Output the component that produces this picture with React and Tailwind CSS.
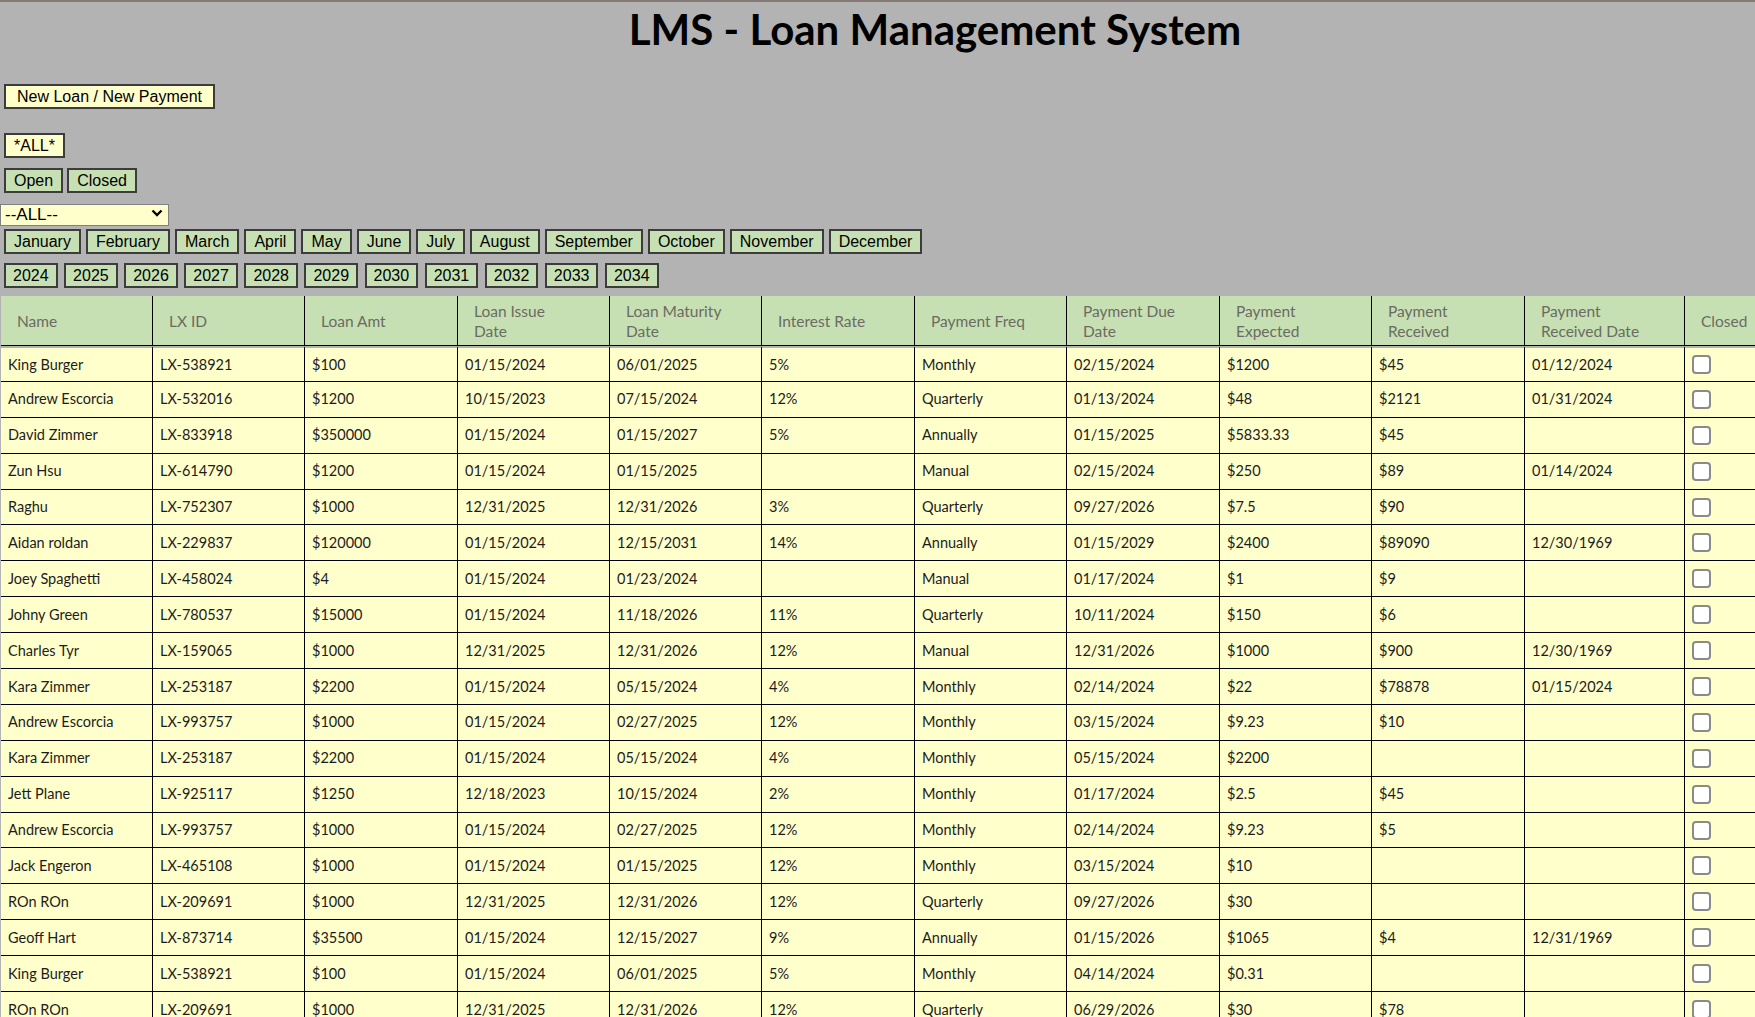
const months = ["January", "February", "March", "April", "May", "June", "July", "August", "September", "October", "November", "December"];
const years = ["2024", "2025", "2026", "2027", "2028", "2029", "2030", "2031", "2032", "2033", "2034"];

const heads = [
  ["Name"],
  ["LX ID"],
  ["Loan Amt"],
  ["Loan Issue", "Date"],
  ["Loan Maturity", "Date"],
  ["Interest Rate"],
  ["Payment Freq"],
  ["Payment Due", "Date"],
  ["Payment", "Expected"],
  ["Payment", "Received"],
  ["Payment", "Received Date"],
  ["Closed"],
];

const widths = ["w-[152px]", "w-[152px]", "w-[153px]", "w-[152px]", "w-[152px]", "w-[153px]", "w-[152px]", "w-[153px]", "w-[152px]", "w-[153px]", "w-[160px]", "w-[185px]"];

const loans = [
  ["King Burger", "LX-538921", "$100", "01/15/2024", "06/01/2025", "5%", "Monthly", "02/15/2024", "$1200", "$45", "01/12/2024"],
  ["Andrew Escorcia", "LX-532016", "$1200", "10/15/2023", "07/15/2024", "12%", "Quarterly", "01/13/2024", "$48", "$2121", "01/31/2024"],
  ["David Zimmer", "LX-833918", "$350000", "01/15/2024", "01/15/2027", "5%", "Annually", "01/15/2025", "$5833.33", "$45", ""],
  ["Zun Hsu", "LX-614790", "$1200", "01/15/2024", "01/15/2025", "", "Manual", "02/15/2024", "$250", "$89", "01/14/2024"],
  ["Raghu", "LX-752307", "$1000", "12/31/2025", "12/31/2026", "3%", "Quarterly", "09/27/2026", "$7.5", "$90", ""],
  ["Aidan roldan", "LX-229837", "$120000", "01/15/2024", "12/15/2031", "14%", "Annually", "01/15/2029", "$2400", "$89090", "12/30/1969"],
  ["Joey Spaghetti", "LX-458024", "$4", "01/15/2024", "01/23/2024", "", "Manual", "01/17/2024", "$1", "$9", ""],
  ["Johny Green", "LX-780537", "$15000", "01/15/2024", "11/18/2026", "11%", "Quarterly", "10/11/2024", "$150", "$6", ""],
  ["Charles Tyr", "LX-159065", "$1000", "12/31/2025", "12/31/2026", "12%", "Manual", "12/31/2026", "$1000", "$900", "12/30/1969"],
  ["Kara Zimmer", "LX-253187", "$2200", "01/15/2024", "05/15/2024", "4%", "Monthly", "02/14/2024", "$22", "$78878", "01/15/2024"],
  ["Andrew Escorcia", "LX-993757", "$1000", "01/15/2024", "02/27/2025", "12%", "Monthly", "03/15/2024", "$9.23", "$10", ""],
  ["Kara Zimmer", "LX-253187", "$2200", "01/15/2024", "05/15/2024", "4%", "Monthly", "05/15/2024", "$2200", "", ""],
  ["Jett Plane", "LX-925117", "$1250", "12/18/2023", "10/15/2024", "2%", "Monthly", "01/17/2024", "$2.5", "$45", ""],
  ["Andrew Escorcia", "LX-993757", "$1000", "01/15/2024", "02/27/2025", "12%", "Monthly", "02/14/2024", "$9.23", "$5", ""],
  ["Jack Engeron", "LX-465108", "$1000", "01/15/2024", "01/15/2025", "12%", "Monthly", "03/15/2024", "$10", "", ""],
  ["ROn ROn", "LX-209691", "$1000", "12/31/2025", "12/31/2026", "12%", "Quarterly", "09/27/2026", "$30", "", ""],
  ["Geoff Hart", "LX-873714", "$35500", "01/15/2024", "12/15/2027", "9%", "Annually", "01/15/2026", "$1065", "$4", "12/31/1969"],
  ["King Burger", "LX-538921", "$100", "01/15/2024", "06/01/2025", "5%", "Monthly", "04/14/2024", "$0.31", "", ""],
  ["ROn ROn", "LX-209691", "$1000", "12/31/2025", "12/31/2026", "12%", "Quarterly", "06/29/2026", "$30", "$78", ""],
];

function Btn({ children, yellow, wide, narrow }) {
  return (
    <button
      className={
        "h-[25px] border-2 border-[#3c3c3c] text-[16px] leading-none text-black font-['Liberation_Sans',Arial,sans-serif] " +
        (wide ? "px-[11px] " : narrow ? "px-[7px] " : "px-2 ") +
        (yellow ? "bg-[#ffffcc]" : "bg-[#c6e0b4]")
      }
    >
      {children}
    </button>
  );
}

export default function App() {
  return (
    <div className="h-screen w-full overflow-hidden bg-[#b3b3b3]">
      <div className="w-[1870px] min-h-screen border-t-2 border-[#857a75] flex flex-col">

        <h1 className="h-[54px] leading-[54px] text-center text-[42px] font-bold text-black font-['Lato','Open_Sans',sans-serif]">
          LMS - Loan Management System
        </h1>

        <div className="mt-[28px] pl-1 flex">
          <Btn yellow wide>New Loan / New Payment</Btn>
        </div>

        <div className="mt-[24px] pl-1 flex">
          <Btn yellow>*ALL*</Btn>
        </div>

        <div className="mt-[10px] pl-1 flex gap-[4px]">
          <Btn>Open</Btn>
          <Btn>Closed</Btn>
        </div>

        <div className="mt-[9px] relative w-[169px] h-[22px]">
          <select className="appearance-none w-full h-full bg-[#ffffcc] border border-[#808080] pl-[4px] text-[17px] leading-none text-black font-['Liberation_Sans',Arial,sans-serif]">
            <option>--ALL--</option>
          </select>
          <svg className="absolute right-[6px] top-[7px] pointer-events-none" width="12" height="9" viewBox="0 0 12 9">
            <path d="M1.5 1.5 L6 6 L10.5 1.5" fill="none" stroke="black" strokeWidth="2.4" />
          </svg>
        </div>

        <div className="mt-[5px] pl-1 flex gap-[5px]">
          {months.map((m) => (
            <Btn key={m}>{m}</Btn>
          ))}
        </div>

        <div className="mt-[9px] pl-1 flex gap-[6.5px]">
          {years.map((y) => (
            <Btn key={y} narrow>{y}</Btn>
          ))}
        </div>

        <table className="mt-[8px] ml-px table-fixed border-separate border-spacing-0 w-[1869px] font-['Lato','Open_Sans',sans-serif]">
          <colgroup>
            {widths.map((w, i) => (
              <col key={i} className={w} />
            ))}
          </colgroup>
          <thead>
            <tr className="h-[50px] bg-[#c6e0b4]">
              {heads.map((h, i) => (
                <th
                  key={i}
                  className="pl-4 text-left align-middle font-normal text-[15.5px] leading-[20px] text-[#6b6b62] border-r border-b border-black"
                >
                  {h.map((line, j) => (
                    <div key={j}>{line}</div>
                  ))}
                </th>
              ))}
            </tr>
          </thead>
          <tbody>
            {loans.map((row, r) => (
              <tr key={r} className="h-[35.9px] bg-[#ffffcc]">
                {row.map((c, i) => (
                  <td
                    key={i}
                    className={
                      "pl-[7px] align-middle text-[14.5px] text-[#1c1c1c] border-r border-b border-black whitespace-nowrap " +
                      (r === 0 ? "border-t-2 border-t-[#b3b3b3]" : "")
                    }
                  >
                    {c}
                  </td>
                ))}
                <td
                  className={
                    "pl-[7px] align-middle border-r border-b border-black " +
                    (r === 0 ? "border-t-2 border-t-[#b3b3b3]" : "")
                  }
                >
                  <div className="w-[19px] h-[19px] rounded-[4px] border-2 border-[#8a8a8a] bg-white" />
                </td>
              </tr>
            ))}
          </tbody>
        </table>
      </div>
    </div>
  );
}
